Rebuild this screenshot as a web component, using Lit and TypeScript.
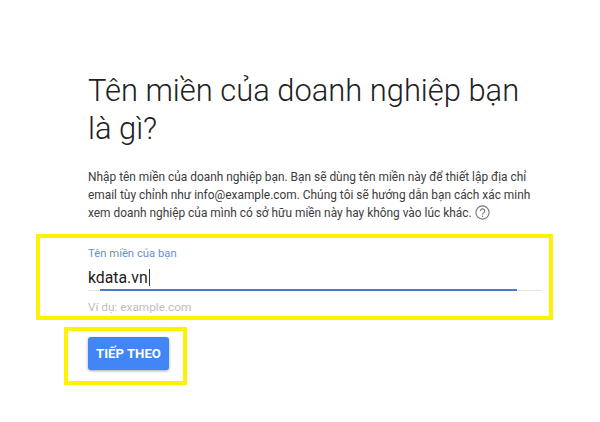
import { LitElement, html, css } from "lit";
import { customElement } from "lit/decorators.js";

@customElement("app-root")
export class AppRoot extends LitElement {
  static styles = css`
    :host { display: block; width: 600px; height: 422px; background: #fff; overflow: hidden; font-family: Roboto, "Liberation Sans", sans-serif; }
    .page { display: flex; flex-direction: column; align-items: flex-start; padding: 72px 0 0 36px; }
    h1 { margin: 0 0 0 52px; width: 450px; font-weight: 300; font-size: 30.9px; line-height: 38px; color: #212121; }
    p { margin: 20px 0 0 52px; width: 445px; font-size: 11.9px; line-height: 18px; color: #3c3c3c; }
    .help { display: inline-block; vertical-align: -3px; margin-left: 0; width: 15px; height: 15px; }
    .annot { border: 4px solid #fff200; box-sizing: border-box; }
    .field { margin-top: 12px; width: 517px; height: 86px; padding: 9px 0 0 48px; display: flex; flex-direction: column; }
    .label { font-size: 11.3px; line-height: 13px; color: #6a8fd0; }
    .value { margin-top: 8px; font-size: 15.8px; line-height: 19px; color: #1a1a1a; display: flex; align-items: center; }
    .caret { width: 1px; height: 17px; background: #333; margin-left: 1px; }
    .line { margin-top: 2px; width: 454px; height: 2px; display: flex; background: linear-gradient(#fff 50%, #e4e4e4 50%); }
    .line i { display: block; margin-left: 12px; width: 417px; height: 2px; background: #4a7cc4; }
    .hint { margin-top: 9px; font-size: 11.8px; line-height: 14px; color: #bdbdbd; }
    .btnbox { margin: 7px 0 0 28px; width: 123px; height: 58px; padding: 6px 0 0 20px; }
    button { display: block; width: 81px; height: 33px; padding: 0; border: 0; border-radius: 3px; background: #4285f4; color: #fff; font: 700 13.2px Roboto, "Liberation Sans", sans-serif; box-shadow: 0 1px 3px rgba(0,0,0,.35); }
  `;
  render() {
    return html`<div class="page">
      <h1>Tên miền của doanh nghiệp bạn là gì?</h1>
      <p>Nhập tên miền của doanh nghiệp bạn. Bạn sẽ dùng tên miền này để thiết lập địa chỉ email tùy chỉnh như info@example.com. Chúng tôi sẽ hướng dẫn bạn cách xác minh xem doanh nghiệp của mình có sở hữu miền này hay không vào lúc khác.
        <svg class="help" viewBox="0 0 15 15" fill="none"><circle cx="7.5" cy="7.5" r="6.6" stroke="#757575" stroke-width="1.1"/><path d="M5.4 6a2.1 2.1 0 1 1 3.4 1.6c-.8.6-1.3 1-1.3 1.9" stroke="#757575" stroke-width="1.1"/><circle cx="7.5" cy="11.2" r=".75" fill="#757575"/></svg></p>
      <div class="annot field">
        <div class="label">Tên miền của bạn</div>
        <div class="value">kdata.vn<span class="caret"></span></div>
        <div class="line"><i></i></div>
        <div class="hint">Ví dụ: example.com</div>
      </div>
      <div class="annot btnbox"><button>TIẾP THEO</button></div>
    </div>`;
  }
}
